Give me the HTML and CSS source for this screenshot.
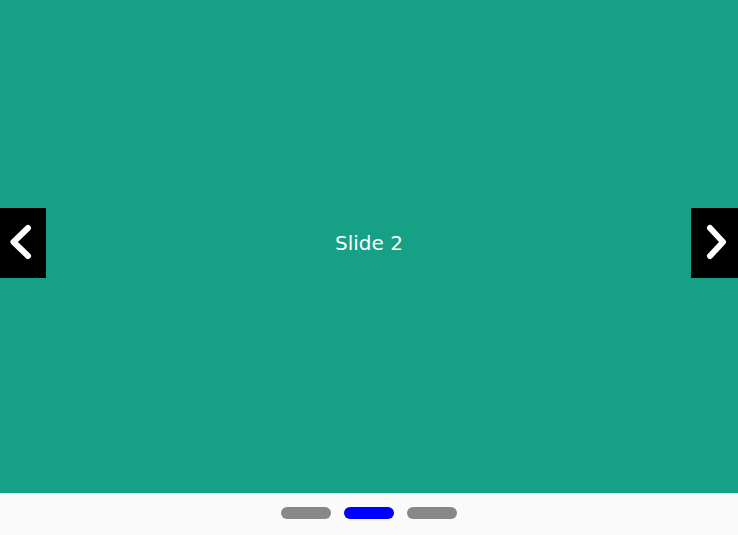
FILE: index.html
```html
<!DOCTYPE html>
<html>
<head>
    <meta charset="UTF-8">
    <title>Slider</title>
    <link rel="stylesheet" href="styles.css">
</head>
<body>
    <div class="slider">
        <div class="slide">Slide 2</div>

        <button class="arrow arrow-prev" aria-label="Previous">
            <svg width="46" height="70" viewBox="0 0 46 70">
                <polyline points="28,20 13.5,34 28,48" />
            </svg>
        </button>
        <button class="arrow arrow-next" aria-label="Next">
            <svg width="47" height="70" viewBox="0 0 47 70">
                <polyline points="19,20 32,34 19,48" />
            </svg>
        </button>
    </div>

    <!-- pager dots -->
    <div class="dots">
        <span class="dot"></span>
        <span class="dot active"></span>
        <span class="dot"></span>
    </div>
</body>
</html>
```

FILE: styles.css
```css
body {
    margin: 0;
    font-family: "DejaVu Sans", Verdana, sans-serif;
    background: #fafafa;
}
.slider {
    position: relative;
    height: 493px;
    background: #16a085;
}
.slide {
    height: 100%;
    display: flex;
    align-items: center;
    justify-content: center;
    color: white;
    font-size: 20px;
    padding-bottom: 7px;
    box-sizing: border-box;
}
.arrow {
    position: absolute;
    top: 208px;
    height: 70px;
    padding: 0;
    border: none;
    background: #000;
    cursor: pointer;
}
.arrow svg {
    display: block;
}
.arrow polyline {
    fill: none;
    stroke: white;
    stroke-width: 6;
    stroke-linecap: round;
    stroke-linejoin: round;
}
.arrow-prev {
    left: 0;
    width: 46px;
}
.arrow-next {
    right: 0;
    width: 47px;
}
.dots {
    display: flex;
    justify-content: center;
    gap: 13px;
    padding: 14px 0 16px;
}
.dot {
    width: 50px;
    height: 12px;
    border-radius: 6px;
    background: #888;
}
.dot.active {
    background: #00f;
}
```
